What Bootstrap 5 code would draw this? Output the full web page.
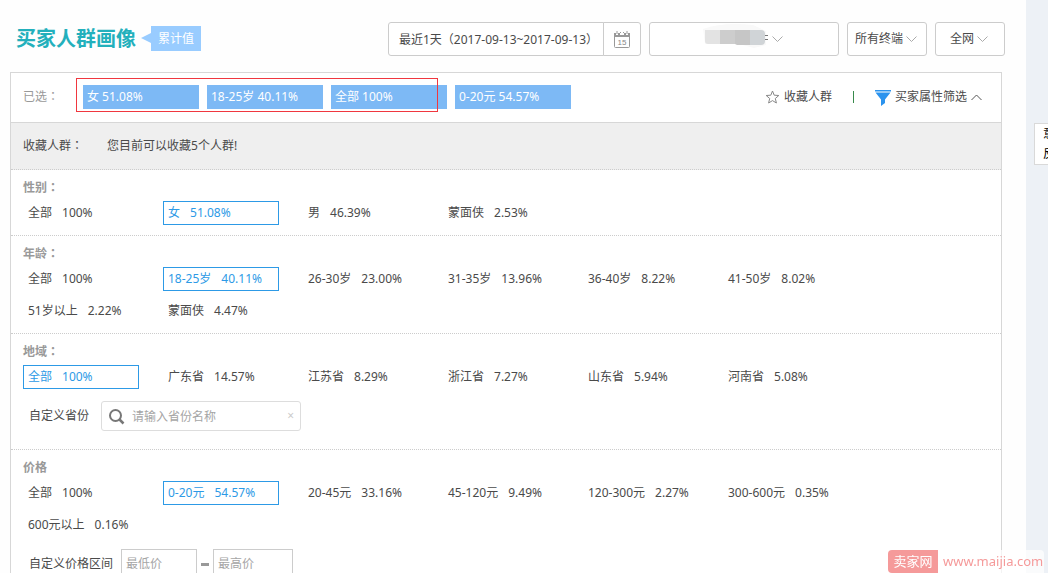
<!DOCTYPE html>
<html lang="zh-CN">
<head>
<meta charset="utf-8">
<meta name="viewport" content="width=device-width, initial-scale=1">
<title>买家人群画像</title>
<link href="https://cdn.jsdelivr.net/npm/bootstrap@5.3.0/dist/css/bootstrap.min.css" rel="stylesheet">
<style>
  body { font: 12px/18px "Noto Sans", "Noto Sans CJK SC", sans-serif; color: #4a4a4a; background: #fefefe; }
  .main-area { padding: 22px 24px 0 10px; min-width: 0; }
  .page-head { margin: 0 -3px 16px 6px; }
  .page-title { font-size: 20px; line-height: 34px; font-weight: 700; color: #23b0bc; }
  .flag { background: #9cf; color: #fff; width: 50px; height: 25px; line-height: 25px; margin-left: 15px; }
  .flag::before { content: ""; position: absolute; right: 100%; top: 7px; border: 5px solid transparent; border-left: 0; border-right: 10px solid #9cf; }
  .form-control, .form-select, .input-group .btn { font-size: 12px; line-height: 18px; color: #4a4a4a; border-color: #ccc; border-radius: 3px; background-color: #fff; height: 34px; padding: 6px 10px; }
  .form-control::placeholder { color: #a5a5a5; }
  .date-group { width: 253px; }
  .date-group .form-control { padding-right: 0; }
  .date-group .btn { width: 38px; padding: 0; }
  .form-select { padding: 6px 7px; background-size: 11px 6px; background-position: right 9px center;
    background-image: url("data:image/svg+xml,%3csvg xmlns='http://www.w3.org/2000/svg' viewBox='0 0 11 6'%3e%3cpath fill='none' stroke='%23aaa' d='M.5.5l5 5 5-5'/%3e%3c/svg%3e"); }
  .sel-shop { width: 190px; }
  .sel-shop .form-select { background-position: right 55px center; }
  .shop-mask { left: 54px; top: 1px; pointer-events: none; }
  .sel-device { width: 80px; }
  .sel-net { width: 70px; padding-left: 14px; background-position: right 16px center; }
  .panel { border: 1px solid #d7d7d7; background: #fff; }
  .picked { height: 50px; padding: 0 19px 1px 12px; border-bottom: 1px solid #d7d7d7; }
  .picked-label { color: #999; width: 60px; }
  .tag, .opt { width: 116px; height: 24px; line-height: 22px; border: 1px solid transparent; padding: 0 4px; text-align: left; white-space: nowrap; background: none; color: inherit; }
  .tag { background: #7db9f5; color: #fff; padding: 0 3px; }
  .focus-frame { left: -7px; top: -7px; width: 362px; height: 34px; border: 1px solid #f0373f; pointer-events: none; }
  .opt span { margin-left: 10px; }
  .opt.active { border-color: #2d9ae6; color: #2d9ae6; }
  .colon { font-family: "Noto Sans CJK TC", sans-serif; line-height: 1; }
  .act { border: 0; background: none; color: #4a4a4a; padding: 0; }
  .bar-sep { width: 1px; height: 12px; background: #388a4c; margin: 0 21px; }
  .saved { background: #efefef; padding: 14px 12px; gap: 24px; }
  .dotted { border-bottom: 1px dotted #ccc; }
  .facet { padding: 9px 12px 10px; }
  .facet h2 { font-size: 12px; line-height: 18px; font-weight: 700; color: #999; margin: 0 0 4px; }
  .opts { gap: 8px 24px; max-width: 840px; }
  .custom-row { margin: 12px 0 8px 6px; }
  .search-box { width: 200px; margin-left: 12px; }
  .search-box .form-control { height: 30px; padding: 5px 20px 5px 30px; border-color: #ddd; }
  .search-box .lens { left: 7px; top: 7px; }
  .search-box .clear { right: 7px; top: 7px; line-height: 16px; color: #ccc; }
  .price-in { height: 30px; border-radius: 0; padding: 4px 4px 6px; width: 76px; margin-left: 8px; }
  .price-in.high { width: 80px; margin-left: 4px; }
  .dash { width: 8px; height: 3px; background: #999; margin-left: 4px; }
  .rail { width: 22px; background: #edf1f6; padding: 123px 0 0 8px; }
  .feedback { width: 42px; height: 42px; border: 1px solid #d9d9d9; background: #fff; padding: 0 8px; line-height: 20px; text-align: left; }
  .brand { font-size: 13px; line-height: 23px; margin-right: 4px; background: rgba(255,255,255,.7); border-radius: 4px 4px 0 0; color: #f59a9a; }
  .brand b { font-weight: 400; background: #f59a9a; color: #fff; width: 50px; border-radius: 4px 0 0 4px; }
  .brand span { width: 106px; padding-left: 5px; }
</style>
</head>
<body>
<div class="d-flex vh-100 overflow-hidden">
  <main class="main-area flex-grow-1">
    <header class="page-head d-flex">
      <h1 class="page-title mb-0">买家人群画像</h1>
      <div class="flag position-relative text-center mt-1">累计值</div>
      <div class="d-flex gap-2 ms-auto">
        <div class="input-group date-group flex-nowrap">
          <input class="form-control" type="text" readonly aria-label="日期" value="最近1天（2017-09-13~2017-09-13）">
          <button class="btn" type="button" aria-label="选择日期">
            <svg width="16" height="17" viewBox="0 0 16 17"><path d="M.5 3v12.500q0 1 1 1h13q1 0 1-1V3" fill="none" stroke="#999"/><path d="M0 2h2v2h2V2h2v2h4V2h2v2h2V2h2v4H0z" fill="#999"/><path d="M3 0v3M6.500 1v1M9.500 1v1M13 0v3" stroke="#999"/><text x="8" y="14" font-size="8" text-anchor="middle" fill="#888" font-family="Liberation Sans">15</text></svg>
          </button>
        </div>
        <div class="sel-shop position-relative">
          <select class="form-select" aria-label="类目"><option></option></select>
          <svg class="shop-mask position-absolute" width="68" height="26" viewBox="0 0 68 26"><path d="M0 6Q20-1 50 2L63 8v14l-12 3-15-4H2z" fill="#f9f9f9"/><path d="M2 7h15v14H5q-3 0-3-3z" fill="#e3e3e3"/><path d="M17 7h15v14H17z" fill="#cdcdcd"/><path d="M32 7h15v15H34l-2-1z" fill="#c6c6c6"/><path d="M47 7h11q4 0 4 4v7q0 4-4 4H47z" fill="#d0d4d7"/><path d="M62 12.500h3M62 16.500h3" stroke="#777"/></svg>
        </div>
        <select class="form-select sel-device" aria-label="终端"><option>所有终端</option></select>
        <select class="form-select sel-net" aria-label="范围"><option>全网</option></select>
      </div>
    </header>

    <section class="panel">
      <div class="picked d-flex align-items-center">
        <div class="picked-label">已选<span class="colon" lang="zh-TW">：</span></div>
        <div class="d-flex gap-2 position-relative">
          <button class="tag" type="button">女 51.08%</button>
          <button class="tag" type="button">18-25岁 40.11%</button>
          <button class="tag" type="button">全部 100%</button>
          <button class="tag" type="button">0-20元 54.57%</button>
          <div class="focus-frame position-absolute"></div>
        </div>
        <div class="d-flex align-items-center ms-auto">
          <button class="act d-flex align-items-center" type="button">
            <svg class="me-1" width="15" height="14" viewBox="0 0 15 14"><path d="M7.500 1l1.700 4.200 4.600.3-3.500 3 1.100 4.500-3.900-2.400L3.600 13l1.100-4.500-3.500-3 4.600-.3z" fill="none" stroke="#888"/></svg>收藏人群</button>
          <div class="bar-sep"></div>
          <button class="act d-flex align-items-center" type="button">
            <svg class="me-1" width="16" height="17" viewBox="0 0 16 17"><path d="M0 1h16v1.500H0zM.5 3.500h15L10 10.500V14l-4 3v-6.500z" fill="#2b93ee"/></svg>买家属性筛选<svg class="ms-1" width="11" height="7" viewBox="0 0 11 7"><path d="M.5 6l5-5 5 5" fill="none" stroke="#555"/></svg></button>
        </div>
      </div>
      <div class="saved dotted d-flex">
        <div>收藏人群<span class="colon" lang="zh-TW">：</span></div>
        <div>您目前可以收藏5个人群!</div>
      </div>

      <div class="facet dotted">
        <h2>性别<span class="colon" lang="zh-TW">：</span></h2>
        <div class="opts d-flex flex-wrap">
          <button class="opt" type="button">全部<span>100%</span></button>
          <button class="opt active" type="button">女<span>51.08%</span></button>
          <button class="opt" type="button">男<span>46.39%</span></button>
          <button class="opt" type="button">蒙面侠<span>2.53%</span></button>
        </div>
      </div>

      <div class="facet dotted">
        <h2>年龄<span class="colon" lang="zh-TW">：</span></h2>
        <div class="opts d-flex flex-wrap">
          <button class="opt" type="button">全部<span>100%</span></button>
          <button class="opt active" type="button">18-25岁<span>40.11%</span></button>
          <button class="opt" type="button">26-30岁<span>23.00%</span></button>
          <button class="opt" type="button">31-35岁<span>13.96%</span></button>
          <button class="opt" type="button">36-40岁<span>8.22%</span></button>
          <button class="opt" type="button">41-50岁<span>8.02%</span></button>
          <button class="opt" type="button">51岁以上<span>2.22%</span></button>
          <button class="opt" type="button">蒙面侠<span>4.47%</span></button>
        </div>
      </div>

      <div class="facet dotted">
        <h2>地域<span class="colon" lang="zh-TW">：</span></h2>
        <div class="opts d-flex flex-wrap">
          <button class="opt active" type="button">全部<span>100%</span></button>
          <button class="opt" type="button">广东省<span>14.57%</span></button>
          <button class="opt" type="button">江苏省<span>8.29%</span></button>
          <button class="opt" type="button">浙江省<span>7.27%</span></button>
          <button class="opt" type="button">山东省<span>5.94%</span></button>
          <button class="opt" type="button">河南省<span>5.08%</span></button>
        </div>
        <div class="custom-row d-flex align-items-center">
          <label for="province">自定义省份</label>
          <div class="search-box position-relative">
            <input class="form-control" id="province" type="text" placeholder="请输入省份名称">
            <svg class="lens position-absolute" width="17" height="17" viewBox="0 0 17 17" fill="none" stroke="#777" stroke-width="2"><circle cx="7.500" cy="7.500" r="5.500"/><path d="M11.500 11.500l4 4" stroke-width="2.500"/></svg>
            <button class="act clear position-absolute" type="button" aria-label="清除">×</button>
          </div>
        </div>
      </div>

      <div class="facet">
        <h2>价格</h2>
        <div class="opts d-flex flex-wrap">
          <button class="opt" type="button">全部<span>100%</span></button>
          <button class="opt active" type="button">0-20元<span>54.57%</span></button>
          <button class="opt" type="button">20-45元<span>33.16%</span></button>
          <button class="opt" type="button">45-120元<span>9.49%</span></button>
          <button class="opt" type="button">120-300元<span>2.27%</span></button>
          <button class="opt" type="button">300-600元<span>0.35%</span></button>
          <button class="opt" type="button">600元以上<span>0.16%</span></button>
        </div>
        <div class="custom-row d-flex align-items-center">
          <label for="low">自定义价格区间</label>
          <input class="form-control price-in" id="low" type="text" placeholder="最低价">
          <div class="dash"></div>
          <input class="form-control price-in high" type="text" placeholder="最高价" aria-label="最高价">
        </div>
      </div>
    </section>
  </main>
  <aside class="rail flex-shrink-0">
    <button class="feedback" type="button">意见反馈</button>
  </aside>
</div>
<div class="brand d-flex position-fixed bottom-0 end-0">
  <b class="text-center">卖家网</b><span>www.maijia.com</span>
</div>
</body>
</html>
